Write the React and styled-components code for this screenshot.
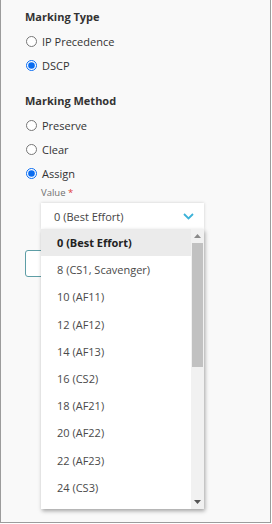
import React from "react"
import styled, { createGlobalStyle } from "styled-components"

const options = [
  "0 (Best Effort)",
  "8 (CS1, Scavenger)",
  "10 (AF11)",
  "12 (AF12)",
  "14 (AF13)",
  "16 (CS2)",
  "18 (AF21)",
  "20 (AF22)",
  "22 (AF23)",
  "24 (CS3)",
]

const App = () => {
  return (
    <>
      <GlobalStyle />
      <Frame>
        <Title>Marking Type</Title>
        <RadioRow>
          <Radio type="radio" name="type" readOnly />
          <span>IP Precedence</span>
        </RadioRow>
        <RadioRow>
          <Radio type="radio" name="type" defaultChecked />
          <span>DSCP</span>
        </RadioRow>

        <Title gap>Marking Method</Title>
        <RadioRow>
          <Radio type="radio" name="method" readOnly />
          <span>Preserve</span>
        </RadioRow>
        <RadioRow>
          <Radio type="radio" name="method" readOnly />
          <span>Clear</span>
        </RadioRow>
        <RadioRow>
          <Radio type="radio" name="method" defaultChecked />
          <span>Assign</span>
        </RadioRow>

        <Field>
          <Label>
            Value <Star>*</Star>
          </Label>
          <SelectWrap>
            <SelectBox>
              <span>0 (Best Effort)</span>
              <svg width="11" height="7" viewBox="0 0 11 7">
                <polyline
                  points="1,1 5.5,5.5 10,1"
                  fill="none"
                  stroke="#3cb2d8"
                  strokeWidth="1.8"
                />
              </svg>
            </SelectBox>
            <Dropdown>
              <OptionList>
                {options.map((o, i) => (
                  <Option key={o} selected={i === 0}>
                    {o}
                  </Option>
                ))}
              </OptionList>
              <Scrollbar>
                <ScrollArrow>
                  <svg width="7" height="4" viewBox="0 0 7 4">
                    <polygon points="0,4 3.5,0 7,4" fill="#8a8a8a" />
                  </svg>
                </ScrollArrow>
                <Thumb />
                <Track />
                <ScrollArrow>
                  <svg width="7" height="4" viewBox="0 0 7 4">
                    <polygon points="0,0 3.5,4 7,0" fill="#555" />
                  </svg>
                </ScrollArrow>
              </Scrollbar>
            </Dropdown>
          </SelectWrap>
        </Field>

        <OutlineButton />
      </Frame>
    </>
  )
}

const GlobalStyle = createGlobalStyle`
  html, body {
    margin: 0;
    background: #ffffff;
    font-family: "Open Sans", "Noto Sans", sans-serif;
  }
`

const Frame = styled.div`
  box-sizing: border-box;
  width: 271px;
  height: 523px;
  border: 1px solid #9c9c9c;
  border-top: none;
  background: #f9f9f9;
  padding: 9px 0 0 24px;
  color: #333;
  font-size: 11px;
`

const Title = styled.div`
  font-weight: 700;
  font-size: 11px;
  line-height: 16px;
  color: #333;
  margin-top: ${(p) => (p.gap ? "16px" : "0")};
  margin-bottom: 4px;
`

const RadioRow = styled.label`
  display: flex;
  align-items: center;
  height: 24px;
  font-size: 11px;
  color: #333;
`

const Radio = styled.input`
  margin: 0 5px 0 1px;
  width: 11px;
  height: 11px;
  accent-color: #0a6cf0;
`

const Field = styled.div`
  padding-left: 16px;
  margin-top: 2px;
`

const Label = styled.div`
  font-size: 9.5px;
  line-height: 12px;
  color: #707070;
`

const Star = styled.span`
  color: #e03a3a;
`

const SelectWrap = styled.div`
  position: relative;
  width: 163px;
  margin-top: 4px;
`

const SelectBox = styled.div`
  box-sizing: border-box;
  height: 26px;
  display: flex;
  align-items: center;
  justify-content: space-between;
  padding: 0 10px 0 13px;
  background: #fff;
  box-shadow: 0 0 3px rgba(0, 0, 0, 0.18);
  font-size: 11px;
  color: #444;
`

const Dropdown = styled.div`
  position: absolute;
  top: 26px;
  left: 0;
  width: 163px;
  height: 280px;
  display: flex;
  background: #fff;
  box-shadow: 1px 2px 4px rgba(0, 0, 0, 0.35);
  overflow: hidden;
  z-index: 2;
`

const OptionList = styled.div`
  flex: 1;
`

const Option = styled.div`
  height: 27.2px;
  display: flex;
  align-items: center;
  padding-left: 16px;
  font-size: 11px;
  color: ${(p) => (p.selected ? "#222" : "#4a4a4a")};
  font-weight: ${(p) => (p.selected ? 700 : 400)};
  background: ${(p) => (p.selected ? "#ebebeb" : "#fff")};
`

const Scrollbar = styled.div`
  width: 13px;
  display: flex;
  flex-direction: column;
  align-items: center;
  background: #f1f1f1;
`

const ScrollArrow = styled.div`
  height: 14px;
  width: 100%;
  display: flex;
  align-items: center;
  justify-content: center;
`

const Thumb = styled.div`
  width: 11px;
  height: 124px;
  background: #c1c1c1;
`

const Track = styled.div`
  flex: 1;
`

const OutlineButton = styled.div`
  box-sizing: border-box;
  width: 70px;
  height: 27px;
  margin-top: 21px;
  border: 1px solid #5e9ea6;
  border-radius: 3px;
  background: #fff;
`

export default App
